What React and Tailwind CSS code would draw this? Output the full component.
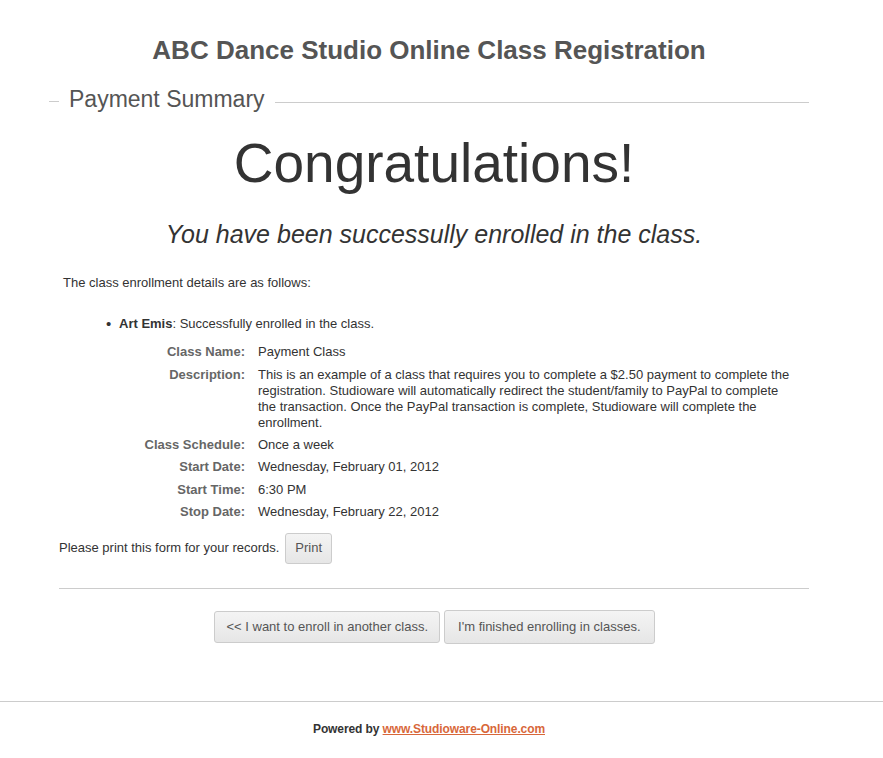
import React from "react";

const details = [
  { label: "Class Name:", value: "Payment Class" },
  {
    label: "Description:",
    value:
      "This is an example of a class that requires you to complete a $2.50 payment to complete the registration. Studioware will automatically redirect the student/family to PayPal to complete the transaction. Once the PayPal transaction is complete, Studioware will complete the enrollment.",
  },
  { label: "Class Schedule:", value: "Once a week" },
  { label: "Start Date:", value: "Wednesday, February 01, 2012" },
  { label: "Start Time:", value: "6:30 PM" },
  { label: "Stop Date:", value: "Wednesday, February 22, 2012" },
];

export default function App() {
  return (
    <div className="min-h-screen bg-white text-[#333] font-['Liberation_Sans',Arial,sans-serif]">
      <div className="w-[760px] ml-[49px]">
        {/* Header */}
        <h1 className="pt-[33px] text-center text-[26px] font-bold leading-[34px] text-[#555]">
          ABC Dance Studio Online Class Registration
        </h1>

        {/* Legend */}
        <div className="mt-[18px] flex items-center">
          <div className="w-[10px] border-t border-[#ccc] mt-[4px]" />
          <span className="px-[10px] text-[23px] leading-[28px] text-[#555]">Payment Summary</span>
          <div className="flex-1 border-t border-[#ccc] mt-[6px]" />
        </div>

        <div className="pl-[10px] text-center">
          <div className="mt-[18px] text-[55px] leading-[64px] text-[#333]">Congratulations!</div>
          <div className="mt-[24px] text-[25px] italic leading-[30px] text-[#333]">
            You have been successully enrolled in the class.
          </div>
        </div>

        {/* Details */}
        <p className="mt-[25px] ml-[14px] text-[13px] leading-[18px]">
          The class enrollment details are as follows:
        </p>

        <div className="mt-[23px] ml-[57px] flex text-[13px] leading-[18px]">
          <span className="w-[13px] text-[15px]">•</span>
          <span>
            <b>Art Emis</b>: Successfully enrolled in the class.
          </span>
        </div>

        <table className="mt-[5px] ml-[89px] text-[13px] border-separate border-spacing-y-[6px]">
          <tbody>
            {details.map((d) => (
              <tr key={d.label} className={d.value.length > 100 ? "leading-[16px]" : "leading-[16.5px]"}>
                <td className="w-[120px] pr-[13px] text-right align-top font-bold text-[#666] whitespace-nowrap">
                  {d.label}
                </td>
                <td className="w-[543px] align-top pr-[8px]">{d.value}</td>
              </tr>
            ))}
          </tbody>
        </table>

        <div className="mt-[6px] ml-[10px] flex items-center gap-[6px] text-[13px]">
          <span>Please print this form for your records.</span>
          <button className="h-[31px] px-[9px] rounded-[3px] border border-[#ccc] bg-gradient-to-b from-[#f4f4f4] to-[#e6e6e6] text-[#555]">
            Print
          </button>
        </div>

        <div className="mt-[24px] ml-[10px] border-t border-[#ccc]" />

        <div className="mt-[21px] flex items-center justify-center gap-[4px] pl-[11px] text-[13px]">
          <button className="h-[32px] px-[11px] rounded-[3px] border border-[#ccc] bg-gradient-to-b from-[#f4f4f4] to-[#e6e6e6] text-[#555]">
            &lt;&lt; I want to enroll in another class.
          </button>
          <button className="h-[34px] px-[13px] rounded-[3px] border border-[#ccc] bg-gradient-to-b from-[#f4f4f4] to-[#e6e6e6] text-[#555]">
            I'm finished enrolling in classes.
          </button>
        </div>
      </div>

      {/* Footer */}
      <div className="mt-[57px] border-t border-[#ccc] pt-[18px]">
        <div className="w-[760px] ml-[49px] text-center text-[12px] font-bold text-[#333] tracking-[-0.1px]">
          Powered by{" "}
          <a href="#" className="text-[#d8673a] underline">
            www.Studioware-Online.com
          </a>
        </div>
      </div>
    </div>
  );
}
